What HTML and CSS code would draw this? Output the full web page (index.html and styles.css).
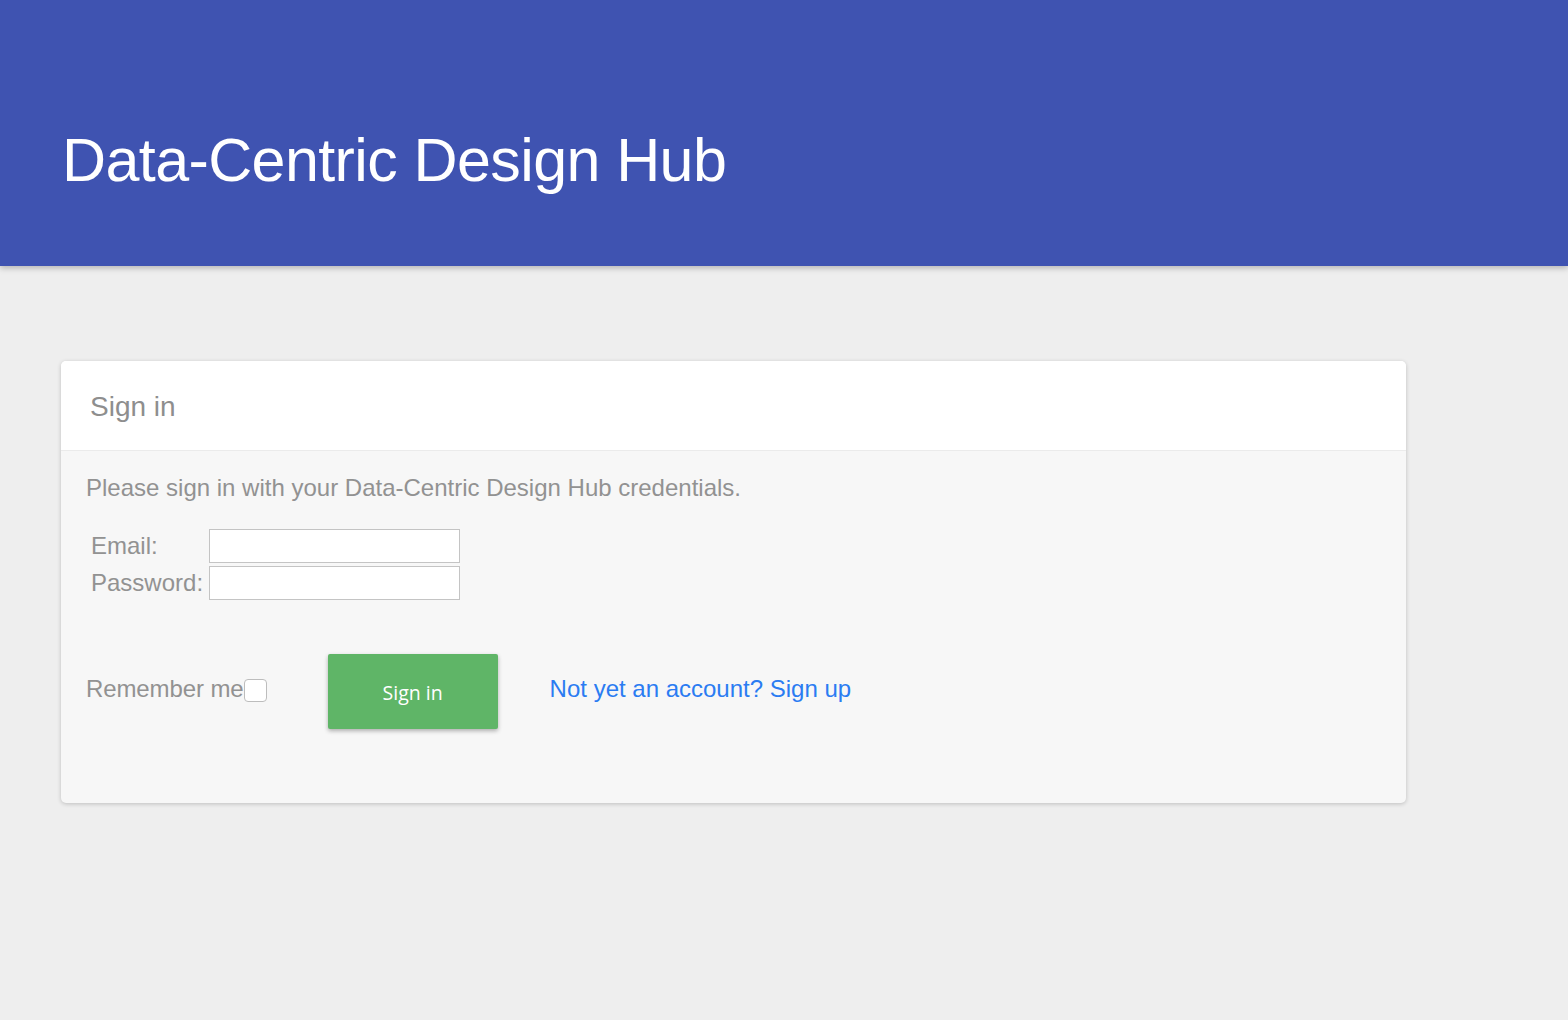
FILE: index.html
```html
<!DOCTYPE html>
<html>
<head>
<meta charset="utf-8">
<link rel="stylesheet" href="styles.css">
</head>
<body>
<header class="topbar">
  <h1 class="title">Data-Centric Design Hub</h1>
</header>
<main class="content">
  <section class="card">
    <div class="card-head">Sign in</div>
    <div class="card-body">
      <p class="intro">Please sign in with your Data-Centric Design Hub credentials.</p>
      <div class="fields">
        <label class="lbl">Email:</label>
        <input class="inp" type="text">
        <label class="lbl">Password:</label>
        <input class="inp" type="password">
      </div>
      <div class="actions">
        <label class="remember">Remember me<span class="check"></span></label>
        <button class="btn">Sign in</button>
        <a class="signup" href="#">Not yet an account? Sign up</a>
      </div>
    </div>
  </section>
</main>
</body>
</html>
```
FILE: styles.css
```css
html, body {
  margin: 0;
  padding: 0;
  background: #eeeeee;
  font-family: "Liberation Sans", Arial, sans-serif;
  height: 100%;
}
.topbar {
  background: #3f53b1;
  height: 266px;
  box-shadow: 0 2px 6px rgba(0,0,0,0.25);
  display: flex;
  align-items: flex-start;
  padding: 0 62px;
  box-sizing: border-box;
}
.title {
  margin: 122px 0 0 0;
  color: #ffffff;
  font-weight: normal;
  font-size: 61px;
  letter-spacing: -0.6px;
  line-height: 76px;
}
.content {
  padding: 95px 0 0 61px;
}
.card {
  width: 1345px;
  background: #f7f7f7;
  border-radius: 5px;
  box-shadow: 0 1px 4px rgba(0,0,0,0.2);
  overflow: hidden;
}
.card-head {
  background: #ffffff;
  height: 90px;
  box-sizing: border-box;
  border-bottom: 1px solid #ebebeb;
  padding: 29px 0 0 29px;
  font-size: 28px;
  color: #8e8e8e;
  line-height: 34px;
}
.card-body {
  padding: 23px 25px 74px 25px;
  color: #929292;
}
.intro {
  margin: 0;
  font-size: 24px;
  line-height: 28px;
}
.fields {
  display: grid;
  grid-template-columns: 118px 251px;
  row-gap: 3px;
  margin: 27px 0 0 5px;
  align-items: center;
}
.lbl {
  font-size: 24px;
  line-height: 28px;
  color: #929292;
}
.inp {
  width: 251px;
  height: 34px;
  box-sizing: border-box;
  border: 1px solid #c4c4c4;
  background: #ffffff;
  margin: 0;
  padding: 0;
}
.actions {
  display: flex;
  align-items: center;
  margin-top: 54px;
}
.remember {
  font-size: 24px;
  letter-spacing: -0.1px;
  display: flex;
  align-items: center;
  color: #929292;
  position: relative;
  top: -3px;
}
.check {
  display: inline-block;
  width: 21px;
  height: 21px;
  border: 1px solid #bdbdbd;
  border-radius: 4px;
  background: #fff;
  margin-left: 0;
  position: relative;
  top: 2px;
}
.btn {
  margin-left: 61px;
  width: 170px;
  height: 75px;
  border: none;
  border-radius: 2px;
  background: #5fb567;
  color: #ffffff;
  font-family: "Open Sans", sans-serif;
  font-size: 19.5px;
  box-shadow: 0 2px 4px rgba(0,0,0,0.3);
  padding-top: 2px;
}
.signup {
  margin-left: 52px;
  font-size: 24px;
  color: #2b7cf2;
  text-decoration: none;
  position: relative;
  top: -3px;
}
```
